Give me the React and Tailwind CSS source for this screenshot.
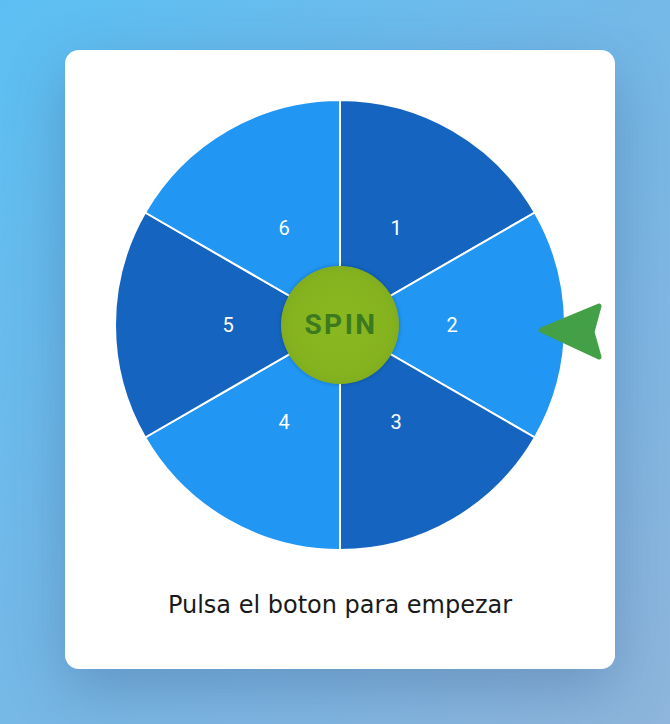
import React from "react";

const segmentos = [
  { n: 1, color: "#1565c0" },
  { n: 2, color: "#2196f3" },
  { n: 3, color: "#1565c0" },
  { n: 4, color: "#2196f3" },
  { n: 5, color: "#1565c0" },
  { n: 6, color: "#2196f3" },
];

// punto en el circulo, angulo en grados desde arriba en sentido horario
const punto = (cx, cy, r, deg) => {
  const a = ((deg - 90) * Math.PI) / 180;
  return [cx + r * Math.cos(a), cy + r * Math.sin(a)];
};

function Ruleta() {
  const c = 225;
  const r = 225;
  return (
    <div className="relative w-[450px] h-[450px]">
      <svg width="450" height="450" viewBox="0 0 450 450" className="block">
        {segmentos.map((s, i) => {
          const [x1, y1] = punto(c, c, r, i * 60);
          const [x2, y2] = punto(c, c, r, (i + 1) * 60);
          const [tx, ty] = punto(c, c, 112, i * 60 + 30);
          return (
            <g key={s.n}>
              <path
                d={`M${c},${c} L${x1},${y1} A${r},${r} 0 0 1 ${x2},${y2} Z`}
                fill={s.color}
                stroke="#ffffff"
                strokeWidth="2"
              />
              <text
                x={tx}
                y={ty}
                fill="#ffffff"
                fontSize="20"
                fontFamily="Roboto, 'Open Sans', sans-serif"
                textAnchor="middle"
                dominantBaseline="central"
              >
                {s.n}
              </text>
            </g>
          );
        })}
      </svg>
      <div className="absolute left-[166px] top-[166px] w-[118px] h-[118px] rounded-full bg-[radial-gradient(circle,#89b820_0%,#85b31f_60%,#779d1c_100%)] shadow-[0_0_4px_rgba(0,0,0,0.25)] flex items-center justify-center">
        <span className="font-['Roboto','Open_Sans',sans-serif] font-bold text-[28px] tracking-[2.5px] pl-[2px] text-[#3b7a1e]">
          SPIN
        </span>
      </div>
      <svg
        className="absolute left-[420px] top-[200px]"
        width="72"
        height="64"
        viewBox="420 200 72 64"
      >
        <polygon
          points="426,230 484,206 477,232 484,257"
          fill="#43a047"
          stroke="#43a047"
          strokeWidth="5"
          strokeLinejoin="round"
        />
      </svg>
    </div>
  );
}

export default function App() {
  return (
    <div className="min-h-screen w-full flex items-center justify-center bg-[linear-gradient(135deg,#5cbff3_0%,#78b8e6_55%,#8fb6dc_100%)]">
      <div className="w-[550px] ml-[10px] bg-white rounded-[14px] px-[50px] pt-[50px] pb-[47px] flex flex-col items-center shadow-[0_20px_60px_rgba(40,70,120,0.3)] -mt-[5px]">
        <Ruleta />
        <p className="mt-[39px] text-[24px] leading-[33px] text-[#1a1a1a] font-['DejaVu_Sans','Noto_Sans',sans-serif]">
          Pulsa el boton para empezar
        </p>
      </div>
    </div>
  );
}
